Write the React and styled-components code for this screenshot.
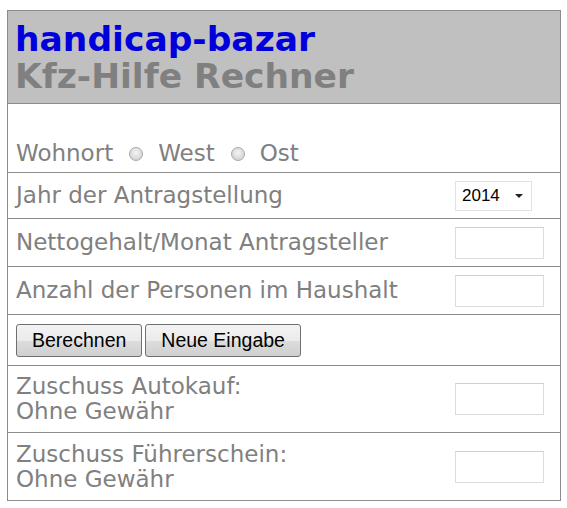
import React, { useState } from "react";
import styled, { createGlobalStyle } from "styled-components";

const GlobalStyle = createGlobalStyle`
  body {
    margin: 0;
    background: #fff;
    font-family: "DejaVu Sans", Verdana, sans-serif;
  }
`;

const Calculator = styled.form`
  margin: 10px 0 0 7px;
  width: 554px;
  border: 1px solid #8c8c8c;
  box-sizing: border-box;
`;

const Header = styled.div`
  background: #c0c0c0;
  height: 92px;
  padding: 10px 0 0 7px;
  box-sizing: border-box;
  font-weight: bold;
  font-size: 34.5px;
  line-height: 37px;
`;

const Brand = styled.div`
  color: #0000dd;
`;

const Title = styled.div`
  color: #808080;
`;

const Row = styled.div`
  display: flex;
  align-items: ${(p) => p.$align || "center"};
  justify-content: space-between;
  height: ${(p) => p.$height}px;
  border-top: 1px solid #8c8c8c;
  box-sizing: border-box;
  padding: ${(p) => p.$pad || "0 16px 0 8px"};
  font-size: 23px;
  color: #808080;
`;

const Label = styled.div`
  line-height: 25px;
`;

const RadioLine = styled.div`
  display: flex;
  align-items: center;
  line-height: 25px;
`;

const RadioGroup = styled.label`
  display: flex;
  align-items: center;
  gap: 15px;
  margin-left: 16px;
`;

const Radio = styled.span`
  width: 14px;
  height: 14px;
  border-radius: 50%;
  border: 1px solid #a8a8a8;
  background: radial-gradient(circle at 50% 40%, #f4f4f4 0%, #d8d8d8 65%, #c4c4c4 100%);
  box-sizing: border-box;
`;

const Select = styled.div`
  display: flex;
  align-items: center;
  justify-content: space-between;
  width: 77px;
  height: 30px;
  margin-right: 12px;
  padding: 0 8px 0 6px;
  box-sizing: border-box;
  border: 1px solid #e2e2e2;
  font-family: "Liberation Sans", Arial, sans-serif;
  font-size: 17px;
  color: #000;
`;

const Caret = styled.span`
  width: 0;
  height: 0;
  border-left: 4px solid transparent;
  border-right: 4px solid transparent;
  border-top: 4px solid #222;
`;

const Field = styled.input`
  width: 89px;
  height: 32px;
  box-sizing: border-box;
  border: 1px solid #dcdcdc;
  border-top-color: #cfcfcf;
  outline: none;
  background: #fff;
`;

const Button = styled.button`
  height: 33px;
  padding: 0 15px;
  font-family: "Liberation Sans", Arial, sans-serif;
  font-size: 19.5px;
  color: #000;
  border: 1px solid #707070;
  border-radius: 3px;
  background: linear-gradient(#f3f3f3 0%, #ebebeb 50%, #dddddd 51%, #cfcfcf 100%);
`;

const Buttons = styled.div`
  display: flex;
  gap: 3px;
`;

export default function App() {
  const [values, setValues] = useState({ netto: "", personen: "", auto: "", fuehrer: "" });
  const change = (e) => setValues({ ...values, [e.target.name]: e.target.value });

  return (
    <>
      <GlobalStyle />
      <Calculator onSubmit={(e) => e.preventDefault()}>
        <Header>
          <Brand>handicap-bazar</Brand>
          <Title>Kfz-Hilfe Rechner</Title>
        </Header>
        <Row $height={69} $align="flex-end" $pad="0 16px 6px 8px">
          <RadioLine>
            Wohnort
            <RadioGroup><Radio />West</RadioGroup>
            <RadioGroup><Radio />Ost</RadioGroup>
          </RadioLine>
        </Row>
        <Row $height={46}>
          <Label>Jahr der Antragstellung</Label>
          <Select>
            2014
            <Caret />
          </Select>
        </Row>
        <Row $height={48}>
          <Label>Nettogehalt/Monat Antragsteller</Label>
          <Field name="netto" value={values.netto} onChange={change} />
        </Row>
        <Row $height={48}>
          <Label>Anzahl der Personen im Haushalt</Label>
          <Field name="personen" value={values.personen} onChange={change} />
        </Row>
        <Row $height={51}>
          <Buttons>
            <Button type="submit">Berechnen</Button>
            <Button type="reset">Neue Eingabe</Button>
          </Buttons>
        </Row>
        <Row $height={67}>
          <Label>
            Zuschuss Autokauf:
            <br />
            Ohne Gewähr
          </Label>
          <Field name="auto" value={values.auto} onChange={change} readOnly />
        </Row>
        <Row $height={68}>
          <Label>
            Zuschuss Führerschein:
            <br />
            Ohne Gewähr
          </Label>
          <Field name="fuehrer" value={values.fuehrer} onChange={change} readOnly />
        </Row>
      </Calculator>
    </>
  );
}
